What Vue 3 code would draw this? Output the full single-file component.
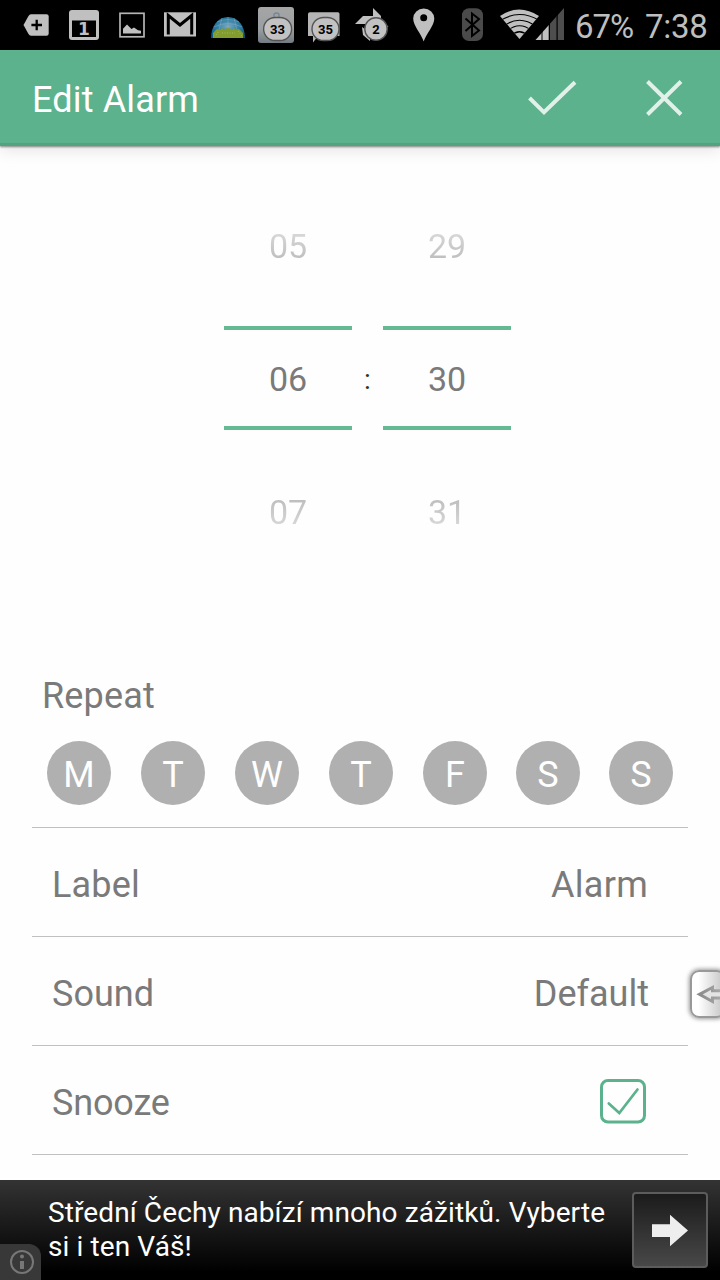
<template>
  <div class="screen">
    <!-- Status bar -->
    <div class="status-bar">
      <div class="status-icons">
        <svg class="status-icon" viewBox="0 0 48 50">
          <path d="M11.500 25L16.500 16Q17.500 14.300 19 14.300H34.500Q36.700 14.300 36.700 16.500V33.500Q36.700 35.700 34.500 35.700H19Q17.500 35.700 16.500 34Z" fill="#c0c0c0" />
          <path d="M24.700 19.700V30.300M19.400 25H30" stroke="#000" stroke-width="2.300" />
        </svg>
        <svg class="status-icon" viewBox="0 0 48 50">
          <rect x="9" y="10" width="30" height="30" rx="3" fill="#c0c0c0" />
          <rect x="12" y="20.500" width="24" height="16.500" fill="#000" />
          <text class="calendar-day" x="23.800" y="34.900" text-anchor="middle">1</text>
        </svg>
        <svg class="status-icon" viewBox="0 0 48 50">
          <rect x="12" y="13.300" width="24" height="23.500" fill="none" stroke="#b4b4b4" stroke-width="1.700" />
          <path d="M15 33.500V28.800L19 24.500L23.500 29L26 27.500L30 30.300L33 30.800V33.500Z" fill="#c0c0c0" />
        </svg>
        <svg class="status-icon" viewBox="0 0 48 50">
          <rect x="8" y="12.300" width="32" height="24.200" fill="#c0c0c0" />
          <path d="M12.300 34.500V15.500L24 25L35.700 15.500V34.500" fill="none" stroke="#000" stroke-width="3" />
        </svg>
        <svg class="status-icon" viewBox="0 0 48 50">
          <defs>
            <radialGradient id="globe" cx="50%" cy="45%" r="65%">
              <stop offset="0" stop-color="#7ba9bf" />
              <stop offset="0.500" stop-color="#317da4" />
              <stop offset="1" stop-color="#075987" />
            </radialGradient>
          </defs>
          <path d="M7 38C7 26 14 17 24 17S41 26 41 38Z" fill="url(#globe)" />
          <path d="M13 22Q24 17 35 22M10 27Q24 20 38 27M24 17V28M18 18L15 30M30 18L33 30" fill="none" stroke="#88afc1" stroke-width="0.800" opacity="0.600" />
          <path d="M9 38V33L13 29L16 30L18 28L20 30Q24 26 28 30L30 28L32 30L35 29L39 33V38Z" fill="#829c2d" />
          <path d="M12 35L15 31M34 31L38 36M18 33H31" stroke="#a9b870" stroke-dasharray="1 1.500" />
        </svg>
        <svg class="status-icon" viewBox="0 0 48 50">
          <defs>
            <linearGradient id="mailTile" x2="0" y2="1">
              <stop offset="0" stop-color="#a5a5a5" />
              <stop offset="0.600" stop-color="#9a9fa2" />
              <stop offset="1" stop-color="#747d84" />
            </linearGradient>
          </defs>
          <rect x="6" y="7" width="36" height="36" rx="3" fill="url(#mailTile)" />
          <path d="M22 18V15Q22 13 24.500 13Q27 13 27 15V18" fill="none" stroke="#758694" stroke-width="1.300" />
          <rect x="11.600" y="17.500" width="28" height="23" rx="11.500" fill="#c2c2c2" stroke="#545454" stroke-width="1.400" />
          <text class="badge-count" x="25.500" y="34" text-anchor="middle">33</text>
        </svg>
        <svg class="status-icon" viewBox="0 0 48 50">
          <path d="M8 14Q8 12.300 10 12.300H38Q39.500 12.300 39.500 14V36H18L13 42.500V36H8Z" fill="#b5b5b5" />
          <rect x="12" y="17.500" width="27" height="23" rx="11.500" fill="#c2c2c2" stroke="#545454" stroke-width="1.400" />
          <text class="badge-count" x="25.500" y="34" text-anchor="middle">35</text>
        </svg>
        <svg class="status-icon" viewBox="0 0 48 50">
          <path d="M25 8L33 16V24H25ZM15 16H25V24H7ZM14 27L22 33V41L15 35ZM33 24L40.500 26L33 33Z" fill="#c0c0c0" />
          <circle cx="28" cy="29" r="11.200" fill="#c2c2c2" stroke="#545454" stroke-width="1.400" />
          <text class="badge-count" x="28" y="34" text-anchor="middle">2</text>
        </svg>
        <svg class="status-icon" viewBox="0 0 48 50">
          <path d="M27.700 41.500C25 33 17.200 26 17.200 18.500A10.500 10 0 0 1 38.300 18.500C38.300 26 30.400 33 27.700 41.500Z" fill="#c0c0c0" />
          <circle cx="27.700" cy="17.800" r="3.500" fill="#000" />
        </svg>
        <svg class="status-icon" viewBox="0 0 48 50">
          <rect x="18" y="8.300" width="21" height="32.700" rx="7" fill="#4a4a4a" />
          <path d="M21.500 18.500L35 30.500L28 36V13.500L35 19L21.500 31" fill="none" stroke="#000" stroke-width="2" />
        </svg>
      </div>
      <svg class="network" viewBox="0 0 72 50">
        <defs>
          <clipPath id="wifiFan"><path d="M8 16Q27 3 47 16L27.500 39Z" /></clipPath>
          <clipPath id="signalWedge"><path d="M43.500 40L72 8V40Z" /></clipPath>
        </defs>
        <g clip-path="url(#wifiFan)">
          <rect width="50" height="50" fill="#c0c0c0" />
          <path d="M7 21.500Q27.500 7.500 49 21.500M11 26.500Q27.500 14 44 26.500M15 31Q27.500 20.500 40 31M19 35.500Q27.500 28 36 35.500" fill="none" stroke="#000" stroke-width="1.200" />
        </g>
        <g clip-path="url(#signalWedge)">
          <path d="M43 40V5H49.500V40ZM50.500 5H56.700V40H50.500Z" fill="#c0c0c0" />
          <path d="M58 5H64.500V40H58ZM65.700 5H72V40H65.700Z" fill="#4e4e4e" />
        </g>
      </svg>
      <span class="battery">67%</span>
      <span class="clock">7:38</span>
    </div>

    <!-- Header -->
    <header class="app-bar">
      <h1 class="app-title">Edit Alarm</h1>
      <button class="action" aria-label="Save">
        <svg viewBox="0 0 112 96">
          <path d="M33.500 48L48 62.300L79 32.300" fill="none" stroke="#e1f1e9" stroke-width="4" />
        </svg>
      </button>
      <button class="action" aria-label="Cancel">
        <svg viewBox="0 0 112 96">
          <path d="M39.500 31.500L73 64.500M73 31.500L39.500 64.500" stroke="#e1f1e9" stroke-width="4" />
        </svg>
      </button>
    </header>

    <main class="content">
      <!-- Time picker -->
      <section class="time-picker">
        <div class="wheel">
          <button class="wheel-item before" @click="shiftHour(-1)">{{ pad(hour - 1, 24) }}</button>
          <div class="wheel-current">{{ pad(hour, 24) }}</div>
          <button class="wheel-item after" @click="shiftHour(1)">{{ pad(hour + 1, 24) }}</button>
        </div>
        <span class="separator">:</span>
        <div class="wheel">
          <button class="wheel-item before" @click="shiftMinute(-1)">{{ pad(minute - 1, 60) }}</button>
          <div class="wheel-current">{{ pad(minute, 60) }}</div>
          <button class="wheel-item after" @click="shiftMinute(1)">{{ pad(minute + 1, 60) }}</button>
        </div>
      </section>

      <!-- Repeat days -->
      <section class="repeat">
        <h2 class="repeat-title">Repeat</h2>
        <div class="days">
          <button
            v-for="(day, index) in days"
            :key="index"
            class="day"
            :class="{ active: day.active }"
            @click="day.active = !day.active"
          >
            {{ day.name }}
          </button>
        </div>
      </section>

      <!-- Options -->
      <section class="options">
        <div class="option">
          <span class="label-name">Label</span>
          <span class="label-value">Alarm</span>
        </div>
        <div class="option">
          <span class="sound-name">Sound</span>
          <span class="sound-value">Default</span>
        </div>
        <div class="option">
          <span class="snooze-name">Snooze</span>
          <button class="checkbox" aria-label="Snooze" @click="snooze = !snooze">
            <svg viewBox="0 0 46 45">
              <rect x="1.500" y="1.500" width="43" height="41.500" rx="6.500" fill="none" stroke="#5bb28c" stroke-width="3" />
              <path v-if="snooze" d="M8.800 24.500L19.300 34L37.500 10.500" fill="none" stroke="#5bb28c" stroke-width="2.700" stroke-linecap="round" />
            </svg>
          </button>
        </div>
      </section>
    </main>

    <!-- Ad banner -->
    <footer class="banner">
      <p class="banner-text">Střední Čechy nabízí mnoho zážitků. Vyberte<br />si i ten Váš!</p>
      <button class="banner-button" aria-label="Open">
        <svg viewBox="0 0 76 76">
          <path d="M20 32.300H38V22.800L56 38.500L38 54.300V45H20Z" fill="#eee" />
        </svg>
      </button>
      <div class="banner-info">
        <svg viewBox="0 0 41 36">
          <circle cx="22" cy="18" r="11" fill="none" stroke="#777" stroke-width="2" />
          <path d="M22 17V25" stroke="#777" stroke-width="4" />
          <circle cx="22" cy="12.500" r="2" fill="#777" />
        </svg>
      </div>
    </footer>

    <!-- Edge handle laid over the list -->
    <div class="edge-handle">
      <svg viewBox="0 0 32 44">
        <defs>
          <linearGradient id="handleArrow">
            <stop offset="0" stop-color="#8b8b8b" />
            <stop offset="1" stop-color="#b0b0b0" />
          </linearGradient>
        </defs>
        <path d="M7.500 22.300L20.500 15.500V18.800H34V26H20.500V29.500Z" fill="#e4e4e4" stroke="url(#handleArrow)" stroke-width="3" />
      </svg>
    </div>
  </div>
</template>

<script setup>
import { ref } from 'vue'

const hour = ref(6)
const minute = ref(30)
const snooze = ref(true)

const days = ref(
  ['M', 'T', 'W', 'T', 'F', 'S', 'S'].map((name) => ({ name, active: false }))
)

// Wraps around and adds the leading zero
const pad = (value, max) => String((value + max) % max).padStart(2, '0')

const shiftHour = (step) => {
  hour.value = (hour.value + step + 24) % 24
}

const shiftMinute = (step) => {
  minute.value = (minute.value + step + 60) % 60
}
</script>

<style>
body {
  margin: 0;
}
</style>

<style scoped>
.screen {
  position: relative;
  width: 720px;
  height: 1280px;
  overflow: hidden;
  display: flex;
  flex-direction: column;
  background: #fefefe;
  color: #7a7a7a;
  font-family: Roboto, "Noto Sans", sans-serif;
  font-size: 36px;
}

button {
  margin: 0;
  padding: 0;
  border: none;
  background: none;
  color: inherit;
  font: inherit;
  cursor: pointer;
}

svg {
  display: block;
}

/* Status bar */
.status-bar {
  flex: none;
  display: flex;
  height: 50px;
  padding-left: 12px;
  background: #000;
  color: #bebebe;
  font-size: 33px;
  line-height: 53px;
  white-space: nowrap;
}

.status-icons {
  display: flex;
}

.status-icon {
  width: 48px;
  height: 50px;
}

.calendar-day {
  font: bold 17px "DejaVu Sans", sans-serif;
  fill: #c0c0c0;
}

.badge-count {
  font: bold 13px Roboto, sans-serif;
  fill: #000;
}

.network {
  width: 72px;
  height: 50px;
}

.battery {
  width: 70px;
  margin-left: 11px;
  letter-spacing: -1px;
}

.clock {
  letter-spacing: -0.3px;
}

/* Header */
.app-bar {
  position: relative;
  z-index: 1;
  flex: none;
  box-sizing: border-box;
  display: flex;
  height: 96px;
  padding-left: 32px;
  background: #5bb28c;
  border-bottom: 3px solid #52a47f;
  box-shadow: 0 1px 2px rgba(0, 0, 0, 0.45), 0 3px 16px rgba(0, 0, 0, 0.12);
  color: #fff;
}

.app-title {
  flex: 1;
  margin: 0;
  font-size: 36px;
  font-weight: 400;
  line-height: 100px;
  letter-spacing: 0.15px;
}

.action {
  width: 112px;
  height: 96px;
}

/* Time picker */
.content {
  flex: 1;
  display: flex;
  flex-direction: column;
  padding: 0 32px;
}

.time-picker {
  display: flex;
  justify-content: center;
  height: 524px;
  padding: 47px 0 0 15px;
  box-sizing: border-box;
  font-size: 34px;
}

.wheel {
  width: 128px;
  text-align: center;
}

.wheel-item {
  display: block;
  width: 128px;
  height: 107px;
  line-height: 107px;
  background-clip: text;
  -webkit-background-clip: text;
  color: transparent;
}

.before {
  margin-bottom: 26px;
  background-image: linear-gradient(#fff, #969696);
}

.after {
  margin-top: 29px;
  background-image: linear-gradient(#969696, #fff);
}

.wheel-current {
  box-sizing: border-box;
  height: 104px;
  border-top: 4px solid #66ba93;
  border-bottom: 4px solid #66ba93;
  line-height: 99px;
}

.separator {
  width: 31px;
  padding-top: 133px;
  line-height: 108px;
  text-align: center;
  font-size: 28px;
  color: #333;
}

/* Repeat */
.repeat {
  box-sizing: border-box;
  height: 158px;
  border-bottom: 1px solid #c0c0c0;
}

.repeat-title {
  margin: 0 0 0 10px;
  font-size: 36px;
  font-weight: 400;
  line-height: 52px;
  letter-spacing: 0.15px;
}

.days {
  display: grid;
  grid-template-columns: repeat(5, 94px) 92px 94px;
  justify-items: center;
  margin-top: 19px;
}

.day {
  width: 64px;
  height: 64px;
  border-radius: 50%;
  background: #b0b0b0;
  color: #fff;
  line-height: 64px;
  padding-top: 2px;
}

.day.active {
  background: #5bb28c;
}

/* Options */
.option {
  box-sizing: border-box;
  display: flex;
  align-items: center;
  justify-content: space-between;
  height: 109px;
  padding: 6px 40px 0 20px;
  border-bottom: 1px solid #c0c0c0;
}

.label-name {
  letter-spacing: 0.2px;
}

.label-value {
  letter-spacing: 0.3px;
}

.sound-value {
  margin-right: -1px;
}

.snooze-name {
  letter-spacing: -0.15px;
}

.checkbox {
  width: 46px;
  height: 45px;
  margin-right: 2px;
  margin-top: -4px;
}

/* Banner */
.banner {
  position: relative;
  flex: none;
  box-sizing: border-box;
  display: flex;
  justify-content: space-between;
  height: 100px;
  padding: 12px 12px 0 48px;
  background: linear-gradient(#333, #000 92%);
  color: #fff;
}

.banner-text {
  margin: 4px 0 0;
  font-size: 28px;
  line-height: 34px;
  letter-spacing: 0.11px;
  white-space: nowrap;
}

.banner-button {
  box-sizing: border-box;
  width: 76px;
  height: 76px;
  border: 2px solid #5c5c5c;
  border-radius: 4px;
  background: linear-gradient(#1b1b1b, #484848);
}

.banner-button svg {
  width: 76px;
  height: 76px;
  margin: -2px;
}

.banner-info {
  position: absolute;
  left: 0;
  bottom: 0;
  width: 41px;
  height: 36px;
  border-top-right-radius: 12px;
  background: #383838;
}

/* Edge handle */
.edge-handle {
  position: absolute;
  top: 970px;
  right: -6px;
  box-sizing: border-box;
  width: 36px;
  height: 48px;
  border: 2px solid #999;
  border-radius: 9px;
  background: linear-gradient(90deg, #fff 20%, #ccc 90%);
  box-shadow: 0 0 4px 1px rgba(0, 0, 0, 0.4);
}

.edge-handle svg {
  width: 32px;
  height: 44px;
}
</style>
